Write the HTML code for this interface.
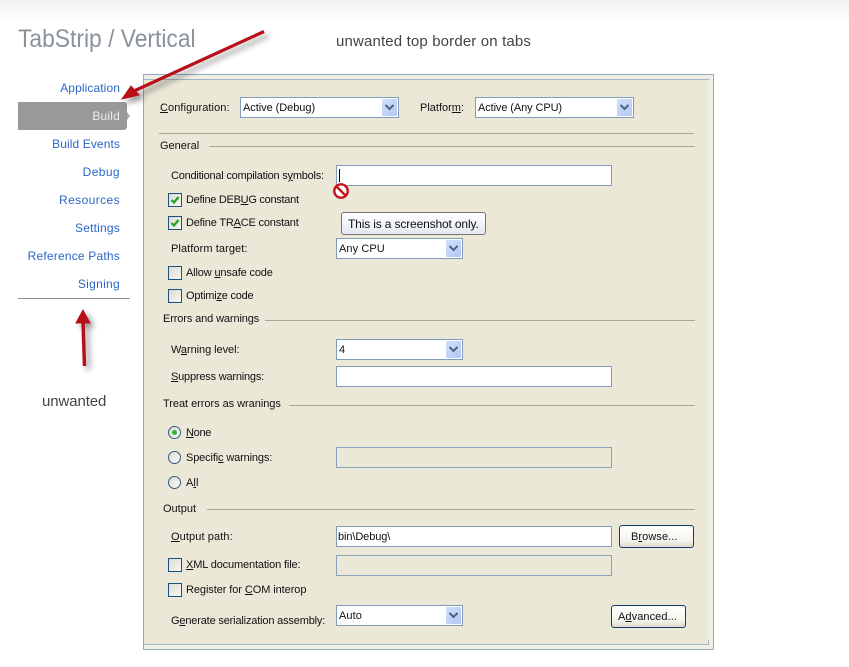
<!DOCTYPE html>
<html><head><meta charset="utf-8">
<style>
html,body{margin:0;padding:0;background:#fff}
#p{position:relative;width:849px;height:667px;overflow:hidden;background:linear-gradient(#f2f2f2 0,#fbfbfb 16px,#fff 26px);font-family:"Liberation Sans",sans-serif}
#p div,#p span.t{position:absolute;box-sizing:border-box}
.t{white-space:nowrap;font-size:11px;line-height:14px;color:#111;font-family:"Liberation Sans",sans-serif;letter-spacing:.08px}
.n{position:absolute;left:0;width:120px;text-align:right;font:12px/16px "Liberation Sans",sans-serif;color:#2b66c8;white-space:nowrap;letter-spacing:.2px}
.f{background:#fff;border:1px solid #7f9db9}
.d{background:#ebe8d8;border:1px solid #8ba3b8}
.ar{right:1px;top:1px;width:15px;height:17px;background:linear-gradient(135deg,#d2e0fb,#b3c6f3);border-radius:1px}
.ar svg{position:absolute;left:2px;top:4px}
.c{width:14px;height:14px;border:1px solid #1c5180;background:linear-gradient(135deg,#dcdcd2,#f8f8f5)}
.c svg{position:absolute;left:0;top:0}
.r{width:13px;height:13px;border-radius:50%;border:1px solid #2f5a80;background:linear-gradient(135deg,#dcdcd2,#fbfbf8)}
.l{height:1px;background:#aca899}
.b{border:1px solid #0f3d68;border-radius:3px;background:linear-gradient(#fff,#f4f4ee 70%,#dcd8c8)}
</style></head><body>
<div id="p">
<span class="t" style="left:18px;top:24px;font:25px/30px 'Liberation Sans',sans-serif;color:#8a929a;letter-spacing:0;transform:scaleX(.913);transform-origin:0 50%">TabStrip / Vertical</span>
<span class="t" style="left:336px;top:34px;font:15px/16px 'Liberation Sans',sans-serif;color:#444;letter-spacing:.15px">unwanted top border on tabs</span>
<span class="t" style="left:42px;top:394px;font:15px/16px 'Liberation Sans',sans-serif;color:#444;letter-spacing:-.1px">unwanted</span>

<span class="n" style="top:80px;letter-spacing:.1px">Application</span>
<div style="left:18px;top:102px;width:109px;height:28px;background:#999;border-radius:0 3px 3px 0"></div>
<div style="left:127px;top:112px;width:0;height:0;border-left:3px solid #aaa;border-top:4px solid transparent;border-bottom:4px solid transparent"></div>
<span class="n" style="top:108px;color:#eee">Build</span>
<span class="n" style="top:136px;letter-spacing:.1px">Build Events</span>
<span class="n" style="top:164px;letter-spacing:.4px">Debug</span>
<span class="n" style="top:192px;letter-spacing:.4px">Resources</span>
<span class="n" style="top:220px">Settings</span>
<span class="n" style="top:248px">Reference Paths</span>
<span class="n" style="top:276px;letter-spacing:.3px">Signing</span>
<div style="left:18px;top:298px;width:112px;height:1px;background:#8f8f9f"></div>

<div style="left:143px;top:74px;width:571px;height:576px;background:#f0efe5;border:1px solid #93a9bd"></div>
<div style="left:144px;top:80px;width:564px;height:564px;background:#ebe8d8"></div>
<div style="left:144px;top:79px;width:565px;height:1px;background:#a3b6c6"></div>
<div style="left:144px;top:644px;width:565px;height:1px;background:#a3b6c6"></div>
<div style="left:708px;top:640px;width:1px;height:5px;background:#a3b6c6"></div>

<span class="t" style="left:160px;top:101px"><u>C</u>onfiguration:</span>
<div class="f" style="left:240px;top:97px;width:159px;height:21px"><span class="t" style="left:2px;top:3px;letter-spacing:-.05px">Active (Debug)</span><div class="ar"><svg width="11" height="9"><path d="M1.5 2 5.5 6 9.5 2" fill="none" stroke="#4d6185" stroke-width="2"/></svg></div></div>
<span class="t" style="left:420px;top:101px;letter-spacing:0">Platfor<u>m</u>:</span>
<div class="f" style="left:475px;top:97px;width:159px;height:21px"><span class="t" style="left:2px;top:3px;letter-spacing:-.1px">Active (Any CPU)</span><div class="ar"><svg width="11" height="9"><path d="M1.5 2 5.5 6 9.5 2" fill="none" stroke="#4d6185" stroke-width="2"/></svg></div></div>
<div class="l" style="left:159px;top:133px;width:535px"></div>

<span class="t" style="left:160px;top:139px;letter-spacing:0">General</span>
<div class="l" style="left:209px;top:146px;width:486px"></div>
<span class="t" style="left:171px;top:169px;letter-spacing:-.23px">Conditional compilation s<u>y</u>mbols:</span>
<div class="f" style="left:336px;top:165px;width:276px;height:21px"><div style="left:2px;top:3px;width:1px;height:13px;background:#000"></div></div>
<svg style="position:absolute;left:333px;top:183px" width="16" height="16"><circle cx="8" cy="8" r="6.7" fill="#fff" stroke="#c4121c" stroke-width="2.4"/><path d="M3.5 3.5 12.5 12.5" stroke="#c4121c" stroke-width="2.4"/></svg>

<div class="c" style="left:168px;top:193px"><svg width="12" height="12"><path d="M2.5 6 5 8.5 9.5 3" fill="none" stroke="#21a121" stroke-width="2.2"/></svg></div>
<span class="t" style="left:186px;top:193px;letter-spacing:-.28px">Define DEB<u>U</u>G constant</span>
<div class="c" style="left:168px;top:216px"><svg width="12" height="12"><path d="M2.5 6 5 8.5 9.5 3" fill="none" stroke="#21a121" stroke-width="2.2"/></svg></div>
<span class="t" style="left:186px;top:216px;letter-spacing:-.19px">Define TR<u>A</u>CE constant</span>
<div style="left:341px;top:212px;width:145px;height:23px;border:1px solid #76767a;border-radius:3px;background:linear-gradient(#fff,#e6e8f2)"></div>
<span class="t" style="left:348px;top:217px;font-size:12px;letter-spacing:-.15px">This is a screenshot only.</span>

<span class="t" style="left:171px;top:242px">Platform tar<u>g</u>et:</span>
<div class="f" style="left:336px;top:238px;width:127px;height:21px"><span class="t" style="left:2px;top:3px">Any CPU</span><div class="ar"><svg width="11" height="9"><path d="M1.5 2 5.5 6 9.5 2" fill="none" stroke="#4d6185" stroke-width="2"/></svg></div></div>
<div class="c" style="left:168px;top:266px"></div>
<span class="t" style="left:186px;top:266px;letter-spacing:-.15px">Allow <u>u</u>nsafe code</span>
<div class="c" style="left:168px;top:289px"></div>
<span class="t" style="left:186px;top:289px;letter-spacing:-.22px">Optimi<u>z</u>e code</span>

<span class="t" style="left:163px;top:312px;letter-spacing:-.12px">Errors and warnings</span>
<div class="l" style="left:265px;top:320px;width:430px"></div>
<span class="t" style="left:171px;top:343px;letter-spacing:-.06px">W<u>a</u>rning level:</span>
<div class="f" style="left:336px;top:339px;width:127px;height:21px"><span class="t" style="left:2px;top:3px">4</span><div class="ar"><svg width="11" height="9"><path d="M1.5 2 5.5 6 9.5 2" fill="none" stroke="#4d6185" stroke-width="2"/></svg></div></div>
<span class="t" style="left:171px;top:370px;letter-spacing:-.2px"><u>S</u>uppress warnings:</span>
<div class="f" style="left:336px;top:366px;width:276px;height:21px"></div>

<span class="t" style="left:163px;top:397px;letter-spacing:-.04px">Treat errors as wranings</span>
<div class="l" style="left:289px;top:405px;width:406px"></div>
<div class="r" style="left:168px;top:426px"><div style="left:3px;top:3px;width:5px;height:5px;border-radius:50%;background:#2fb53a"></div></div>
<span class="t" style="left:186px;top:426px;letter-spacing:-.3px"><u>N</u>one</span>
<div class="r" style="left:168px;top:451px"></div>
<span class="t" style="left:186px;top:451px;letter-spacing:-.14px">Specifi<u>c</u> warnings:</span>
<div class="d" style="left:336px;top:447px;width:276px;height:21px"></div>
<div class="r" style="left:168px;top:476px"></div>
<span class="t" style="left:186px;top:476px">A<u>l</u>l</span>

<span class="t" style="left:163px;top:502px;letter-spacing:0">Output</span>
<div class="l" style="left:207px;top:509px;width:488px"></div>
<span class="t" style="left:171px;top:530px;letter-spacing:.1px"><u>O</u>utput path:</span>
<div class="f" style="left:336px;top:526px;width:276px;height:21px"><span class="t" style="left:1px;top:3px;letter-spacing:-.1px">bin\Debug\</span></div>
<div class="b" style="left:619px;top:525px;width:75px;height:23px"></div>
<span class="t" style="left:631px;top:530px">B<u>r</u>owse...</span>
<div class="c" style="left:168px;top:558px"></div>
<span class="t" style="left:186px;top:558px;letter-spacing:-.14px"><u>X</u>ML documentation file:</span>
<div class="d" style="left:336px;top:555px;width:276px;height:21px"></div>
<div class="c" style="left:168px;top:583px"></div>
<span class="t" style="left:186px;top:583px;letter-spacing:-.08px">Register for <u>C</u>OM interop</span>
<span class="t" style="left:171px;top:614px;letter-spacing:-.17px">G<u>e</u>nerate serialization assembly:</span>
<div class="f" style="left:336px;top:605px;width:127px;height:21px"><span class="t" style="left:2px;top:3px">Auto</span><div class="ar"><svg width="11" height="9"><path d="M1.5 2 5.5 6 9.5 2" fill="none" stroke="#4d6185" stroke-width="2"/></svg></div></div>
<div class="b" style="left:611px;top:605px;width:75px;height:23px"></div>
<span class="t" style="left:618px;top:610px">A<u>d</u>vanced...</span>

<svg style="position:absolute;left:0;top:0;filter:drop-shadow(4px 4px 3px rgba(0,0,0,.4))" width="849" height="667">
<path d="M264 31.5 134 91" stroke="#b8101a" stroke-width="3.2" fill="none"/>
<path d="M122 99 131 86 139 95Z" fill="#b8101a" stroke="#b8101a"/>
<path d="M84.5 366 83 320" stroke="#b8101a" stroke-width="3.5" fill="none"/>
<path d="M83 310 76 323 90 323Z" fill="#b8101a" stroke="#b8101a"/>
</svg>
</div>
</body></html>
